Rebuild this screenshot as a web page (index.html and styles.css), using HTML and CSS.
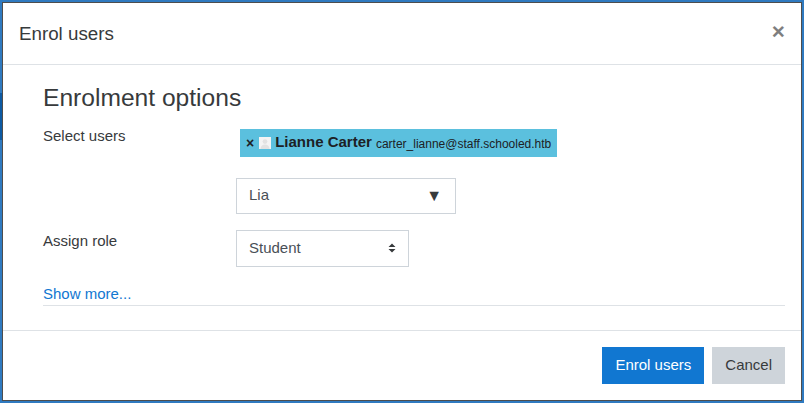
FILE: index.html
```html
<!DOCTYPE html>
<html>
<head>
<meta charset="utf-8">
<link rel="stylesheet" href="styles.css">
</head>
<body>
<div class="backdrop-mark"></div>
<div class="modal">
  <div class="modal-header">
    <h5 class="modal-title">Enrol users</h5>
    <span class="close">×</span>
  </div>
  <div class="modal-body">
    <h3 class="section-title">Enrolment options</h3>
    <div class="form-row">
      <div class="form-label">Select users</div>
      <div class="form-control-col">
        <div class="selection">
          <span class="chip">
            <span class="chip-x">×</span>
            <span class="chip-pic">
              <svg width="12" height="12" viewBox="0 0 12 12"><rect width="12" height="12" fill="#f4f4f4"/><circle cx="6" cy="4.6" r="2.4" fill="#e2e2e2"/><path d="M1.5 12c0-3 2-4.5 4.5-4.5s4.5 1.5 4.5 4.5z" fill="#e2e2e2"/></svg>
            </span>
            <span class="chip-name">Lianne Carter</span>
            <span class="chip-email">carter_lianne@staff.schooled.htb</span>
          </span>
        </div>
        <div class="search-input">
          <span>Lia</span>
          <span class="down-arrow">▼</span>
        </div>
      </div>
    </div>
    <div class="form-row role-row">
      <div class="form-label">Assign role</div>
      <div class="form-control-col">
        <div class="select">
          <span>Student</span>
          <svg class="updown" width="8" height="10" viewBox="0 0 8 10"><path d="M4 0.5L7.5 4H0.5z M4 9.5L7.5 6H0.5z" fill="#373a3c"/></svg>
        </div>
      </div>
    </div>
    <div class="show-more"><a href="#" class="link">Show more...</a></div>
  </div>
  <div class="modal-footer">
    <button class="btn btn-primary">Enrol users</button>
    <button class="btn btn-secondary">Cancel</button>
  </div>
</div>
</body>
</html>
```
FILE: styles.css
```css
* { box-sizing: border-box; }
html, body { margin: 0; padding: 0; }
body {
  background: #2f7ac0;
  width: 804px;
  height: 403px;
  padding: 2px 2px 2px 2px;
  font-family: "Liberation Sans", Arial, sans-serif;
  font-size: 15px;
  line-height: 1.5;
  color: #373a3c;
  position: relative;
  overflow: hidden;
}
.backdrop-mark {
  position: absolute;
  left: 0;
  top: 93px;
  width: 2px;
  height: 47px;
  background: #0d5aa3;
}
.modal {
  width: 800px;
  height: 399px;
  background: #fff;
  border: 1px solid #4d4d4d;
  display: flex;
  flex-direction: column;
}
.modal-header {
  height: 62px;
  flex: none;
  padding: 0 16px;
  border-bottom: 1px solid #dee2e6;
  display: flex;
  align-items: center;
  justify-content: space-between;
}
.modal-title {
  margin: 0;
  font-size: 18.75px;
  font-weight: 400;
  line-height: 1.2;
  color: #373a3c;
  padding-top: 1px;
}
.close {
  font-size: 22.5px;
  font-weight: 700;
  line-height: 1;
  color: #000;
  opacity: 0.5;
  margin-top: -3px;
}
.modal-body {
  flex: 1;
  min-height: 0;
  padding: 18px 16px 24px 40px;
  border-bottom: 1px solid #dee2e6;
}
.section-title {
  margin: 0 0 12px 0;
  font-size: 24.6px;
  font-weight: 400;
  line-height: 1.2;
  color: #373a3c;
}
.form-row {
  display: flex;
}
.form-label {
  width: 193px;
  flex: none;
  color: #373a3c;
}
.form-control-col {
  display: flex;
  flex-direction: column;
  align-items: flex-start;
}
.selection {
  padding: 4px;
  margin-bottom: 17px;
}
.chip {
  display: flex;
  align-items: center;
  height: 28px;
  padding: 0 6px;
  background: #5bc0de;
  color: #1d2125;
  white-space: nowrap;
}
.chip-x {
  font-weight: 700;
  font-size: 14px;
  line-height: 1;
  margin-right: 5px;
  margin-top: 1px;
}
.chip-pic {
  display: flex;
  width: 12px;
  height: 12px;
  margin-right: 4px;
}
.chip-name {
  font-weight: 700;
  font-size: 15px;
  margin-right: 4px;
}
.chip-email {
  font-size: 12px;
  margin-top: 2px;
}
.search-input {
  width: 220px;
  height: 36px;
  border: 1px solid #ced4da;
  padding: 0 13px 0 12px;
  display: flex;
  align-items: center;
  justify-content: space-between;
  color: #495057;
}
.down-arrow {
  font-size: 16px;
  color: #373a3c;
}
.role-row {
  margin-top: 16px;
}
.select {
  width: 173px;
  height: 37px;
  border: 1px solid #ced4da;
  padding: 0 12px 0 12px;
  display: flex;
  align-items: center;
  justify-content: space-between;
  color: #495057;
}
.show-more {
  margin-top: 16px;
  border-bottom: 1px solid #dee2e6;
  height: 23px;
  line-height: 22px;
}
.link {
  color: #1177d1;
  text-decoration: none;
}
.modal-footer {
  height: 69px;
  flex: none;
  padding: 0 16px;
  display: flex;
  align-items: center;
  justify-content: flex-end;
  gap: 8px;
}
.btn {
  font-family: "Liberation Sans", Arial, sans-serif;
  font-size: 15px;
  line-height: 22.5px;
  padding: 6px 12px;
  border: 1px solid transparent;
  border-radius: 0;
  height: 37px;
}
.btn-primary {
  background: #1177d1;
  color: #fff;
}
.btn-secondary {
  background: #ced4da;
  color: #373a3c;
}
```
